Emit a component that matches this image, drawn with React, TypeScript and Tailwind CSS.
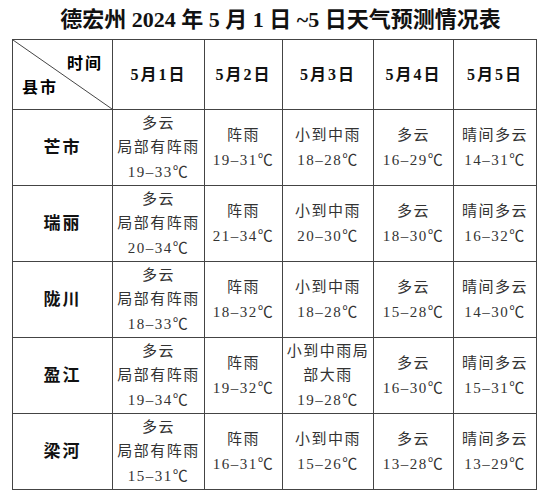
const days = ["5月1日", "5月2日", "5月3日", "5月4日", "5月5日"];

const rows: { name: string; cells: string[][] }[] = [
  {
    name: "芒市",
    cells: [
      ["多云", "局部有阵雨", "19–33℃"],
      ["阵雨", "19–31℃"],
      ["小到中雨", "18–28℃"],
      ["多云", "16–29℃"],
      ["晴间多云", "14–31℃"],
    ],
  },
  {
    name: "瑞丽",
    cells: [
      ["多云", "局部有阵雨", "20–34℃"],
      ["阵雨", "21–34℃"],
      ["小到中雨", "20–30℃"],
      ["多云", "18–30℃"],
      ["晴间多云", "16–32℃"],
    ],
  },
  {
    name: "陇川",
    cells: [
      ["多云", "局部有阵雨", "18–33℃"],
      ["阵雨", "18–32℃"],
      ["小到中雨", "18–28℃"],
      ["多云", "15–28℃"],
      ["晴间多云", "14–30℃"],
    ],
  },
  {
    name: "盈江",
    cells: [
      ["多云", "局部有阵雨", "19–34℃"],
      ["阵雨", "19–32℃"],
      ["小到中雨局", "部大雨", "19–28℃"],
      ["多云", "16–30℃"],
      ["晴间多云", "15–31℃"],
    ],
  },
  {
    name: "梁河",
    cells: [
      ["多云", "局部有阵雨", "15–31℃"],
      ["阵雨", "16–31℃"],
      ["小到中雨", "15–26℃"],
      ["多云", "13–28℃"],
      ["晴间多云", "13–29℃"],
    ],
  },
];

const font = { fontFamily: '"Liberation Serif", "Noto Sans CJK SC", serif' };

export default function App() {
  return (
    <div className="w-[549px] h-[500px] bg-white text-black" style={font}>
      <h1 className="h-[39px] pl-[12px] flex items-center justify-center text-[22px] font-bold text-[#111] whitespace-pre">
        德宏州 2024 年 5 月 1 日 ~5 日天气预测情况表
      </h1>

      <table className="ml-[12px] table-fixed border-collapse w-[524px]">
        <colgroup>
          <col className="w-[100px]" />
          <col className="w-[92px]" />
          <col className="w-[78px]" />
          <col className="w-[91px]" />
          <col className="w-[80px]" />
          <col className="w-[83px]" />
        </colgroup>
        <thead>
          <tr className="h-[70px]">
            <th className="border border-[#444] p-0 font-normal">
              <div className="relative h-[69px] flex flex-col justify-between pt-[12px] pb-[10px] pl-[9px] pr-[9px] text-[16px] font-bold tracking-[2px]">
                <svg className="absolute inset-0 w-full h-full" viewBox="0 0 100 70" preserveAspectRatio="none">
                  <line x1="0" y1="0" x2="100" y2="70" stroke="#444" strokeWidth="1" vectorEffect="non-scaling-stroke" />
                </svg>
                <span className="self-end">时间</span>
                <span className="self-start">县市</span>
              </div>
            </th>
            {days.map((d) => (
              <th key={d} className="border border-[#444] p-0 text-[16px] font-bold tracking-[2px] text-[#111]">
                {d}
              </th>
            ))}
          </tr>
        </thead>
        <tbody>
          {rows.map((r) => (
            <tr key={r.name} className="h-[76px]">
              <td className="border border-[#444] p-0 text-center text-[17px] font-bold tracking-[2px] text-[#111]">
                {r.name}
              </td>
              {r.cells.map((lines, i) => (
                <td key={i} className="border border-[#444] p-0 text-center text-[15px] leading-[24.5px] tracking-[1.5px] text-[#333]">
                  {lines.map((l, j) => (
                    <div key={j}>{l}</div>
                  ))}
                </td>
              ))}
            </tr>
          ))}
        </tbody>
      </table>
    </div>
  );
}
